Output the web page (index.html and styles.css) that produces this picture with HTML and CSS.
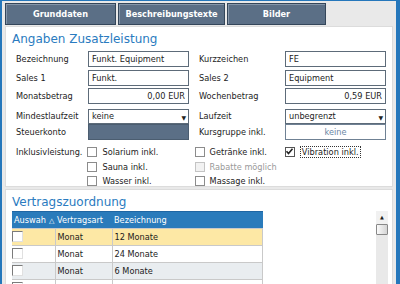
FILE: index.html
```html
<!DOCTYPE html>
<html lang="de">

<head>
    <meta charset="UTF-8">
    <title>Zusatzleistung</title>
    <link rel="stylesheet" href="styles.css">
</head>

<body>
    <div class="rahmen">
        <div class="tabs">
            <div class="tab tab1">Grunddaten</div>
            <div class="tab tab2">Beschreibungstexte</div>
            <div class="tab tab3">Bilder</div>
        </div>

        <div class="panel oben">
            <h2 class="titel">Angaben Zusatzleistung</h2>

            <div class="felder">
                <span class="label">Bezeichnung</span>
                <div class="feld">Funkt. Equipment</div>
                <span class="label rechts">Kurzzeichen</span>
                <div class="feld">FE</div>

                <span class="label">Sales 1</span>
                <div class="feld">Funkt.</div>
                <span class="label rechts">Sales 2</span>
                <div class="feld">Equipment</div>

                <span class="label">Monatsbetrag</span>
                <div class="feld zahl">0,00 EUR</div>
                <span class="label rechts">Wochenbetrag</span>
                <div class="feld zahl">0,59 EUR</div>

                <span class="label">Mindestlaufzeit</span>
                <div class="feld auswahl">keine<span class="pfeil">&#9660;</span></div>
                <span class="label rechts">Laufzeit</span>
                <div class="feld auswahl">unbegrenzt<span class="pfeil">&#9660;</span></div>

                <span class="label">Steuerkonto</span>
                <div class="feld dunkel"></div>
                <span class="label rechts">Kursgruppe inkl.</span>
                <div class="feld knopf">keine</div>
            </div>

            <div class="checks">
                <span class="label">Inklusivleistung.</span>
                <div class="spalte">
                    <div class="check"><span class="cb"></span>Solarium inkl.</div>
                    <div class="check"><span class="cb"></span>Sauna inkl.</div>
                    <div class="check"><span class="cb"></span>Wasser inkl.</div>
                </div>
                <div class="spalte mitte">
                    <div class="check"><span class="cb"></span>Getränke inkl.</div>
                    <div class="check aus"><span class="cb"></span>Rabatte möglich</div>
                    <div class="check"><span class="cb"></span>Massage inkl.</div>
                </div>
                <div class="spalte letzte">
                    <div class="check"><span class="cb an"><svg width="9" height="9" viewBox="0 0 9 9"><path d="M1.5 4.2 L3.5 6.5 L7.5 1.8" fill="none" stroke="#222" stroke-width="1.6"/></svg></span><span class="fokus">Vibration inkl.</span></div>
                </div>
            </div>
        </div>

        <div class="panel unten">
            <h2 class="titel">Vertragszuordnung</h2>
            <div class="liste">
                <table class="tabelle">
                    <thead>
                        <tr>
                            <th class="c1">Auswah<span class="sort">&#9651;</span></th>
                            <th class="c2">Vertragsart</th>
                            <th>Bezeichnung</th>
                        </tr>
                    </thead>
                    <tbody>
                        <tr class="gewaehlt">
                            <td><span class="cb tief"></span></td>
                            <td>Monat</td>
                            <td>12 Monate</td>
                        </tr>
                        <tr>
                            <td><span class="cb tief"></span></td>
                            <td>Monat</td>
                            <td>24 Monate</td>
                        </tr>
                        <tr class="grau">
                            <td><span class="cb tief"></span></td>
                            <td>Monat</td>
                            <td>6 Monate</td>
                        </tr>
                        <tr>
                            <td><span class="cb tief"></span></td>
                            <td>Monat</td>
                            <td>Probeabo</td>
                        </tr>
                    </tbody>
                </table>
                <div class="scroll">
                    <div class="hoch">&#9650;</div>
                    <div class="griff"></div>
                </div>
            </div>
        </div>
    </div>
</body>
</html>
```

FILE: styles.css
```css
body {
    margin: 0;
    width: 400px;
    height: 284px;
    overflow: hidden;
    font-family: "DejaVu Sans", Verdana, sans-serif;
    font-size: 8.2px;
    color: #1c1c1c;
    background-color: #e9e9e9;
}

.rahmen {
    height: 283px;
    border-top: 1px solid #2577bb;
    border-left: 2px solid #2577bb;
    border-right: 4px solid #2577bb;
    background-color: #e9e9e9;
}

.tabs {
    display: flex;
    gap: 2px;
    margin: 2px 0 0 3px;
    height: 22px;
}

.tab {
    box-sizing: border-box;
    height: 22px;
    background-color: #5b6f86;
    border: 1px solid #34465a;
    box-shadow: inset 1px 1px 0 #8596aa;
    color: white;
    font-weight: bold;
    text-align: center;
    line-height: 20px;
}

.tab1 {
    width: 111px;
}

.tab2 {
    width: 107px;
}

.tab3 {
    width: 99px;
}

.panel {
    box-sizing: border-box;
    width: 388px;
    margin-left: 3px;
    background-color: white;
    border: 1px solid #dcdcdc;
}

.oben {
    height: 161px;
    margin-top: 1px;
}

.unten {
    height: 100px;
    margin-top: 2px;
}

.titel {
    margin: 0;
    padding: 4px 0 0 6px;
    font-size: 12px;
    font-weight: normal;
    line-height: 16px;
    color: #2a7bc0;
}

.felder {
    display: grid;
    grid-template-columns: 72px 101px 96px 101px;
    grid-template-rows: 19px 18px 20px 16px 17px;
    margin: 4px 0 0 10px;
}

.label {
    line-height: 16px;
}

.rechts {
    padding-left: 10px;
}

.feld {
    box-sizing: border-box;
    height: 16px;
    padding: 0 3px;
    line-height: 14px;
    border: 1px solid #5d6b79;
    background-color: white;
}

.zahl {
    text-align: right;
}

.auswahl {
    position: relative;
    height: 15px;
    line-height: 13px;
    margin-top: 1px;
}

.pfeil {
    position: absolute;
    right: 2px;
    top: 1px;
    font-size: 6px;
    color: #222;
}

.dunkel {
    background-color: #5b6f86;
    border-color: #4b5d70;
}

.knopf {
    text-align: center;
    color: #6a86a4;
    border-color: #6f8194;
}

.checks {
    display: flex;
    margin: 4px 0 0 10px;
}

.checks .label {
    width: 72px;
    line-height: 14px;
}

.spalte {
    width: 108px;
}

.mitte {
    width: 91px;
}

.check {
    display: flex;
    align-items: center;
    height: 14.5px;
    gap: 5px;
}

.cb {
    box-sizing: border-box;
    display: inline-block;
    width: 10px;
    height: 10px;
    border: 1px solid #8c8c8c;
    background-color: white;
}

.an {
    border-color: #555;
}

.an svg {
    display: block;
    margin: -1px 0 0 -1px;
}

.aus {
    color: #9a9a9a;
}

.aus .cb {
    border-color: #c4c4c4;
    background-color: #f2f2f2;
}

.fokus {
    border: 1px dotted #333;
    padding: 0 1px;
    line-height: 10px;
}

.liste {
    display: flex;
    margin: 1px 0 0 6px;
}

.tabelle {
    width: 251px;
    border-collapse: collapse;
    font-size: 8.2px;
}

.tabelle th {
    height: 16px;
    padding: 0 0 0 2px;
    background-color: #2a7bbb;
    border-top: 1px solid #1f66a3;
    color: white;
    font-weight: normal;
    text-align: left;
    white-space: nowrap;
}

.tabelle .c1 {
    width: 41px;
}

.tabelle .c2 {
    width: 55px;
}

.sort {
    margin-left: 3px;
    font-size: 7px;
}

.tabelle td {
    height: 16px;
    padding: 0 0 0 2px;
    border: 1px solid #c9c9c9;
    border-left: 0;
}

.tabelle td:first-child {
    padding-left: 0;
}

.gewaehlt td {
    background-color: #fde8a5;
}

.grau td {
    background-color: #e9edf0;
}

.tief {
    width: 11px;
    height: 11px;
    margin-top: 1px;
    border-color: #7b7b7b #e0e0e0 #e0e0e0 #7b7b7b;
}

.scroll {
    width: 12px;
    height: 80px;
    margin-left: 113px;
    background-color: #e9e9e9;
}

.hoch {
    height: 13px;
    font-size: 5px;
    line-height: 13px;
    text-align: center;
    background-color: #f1f1f1;
}

.griff {
    box-sizing: border-box;
    height: 11px;
    border: 1px solid #888;
    border-radius: 1px;
    background: linear-gradient(to right, #fafafa, #d4d4d4);
}
```
